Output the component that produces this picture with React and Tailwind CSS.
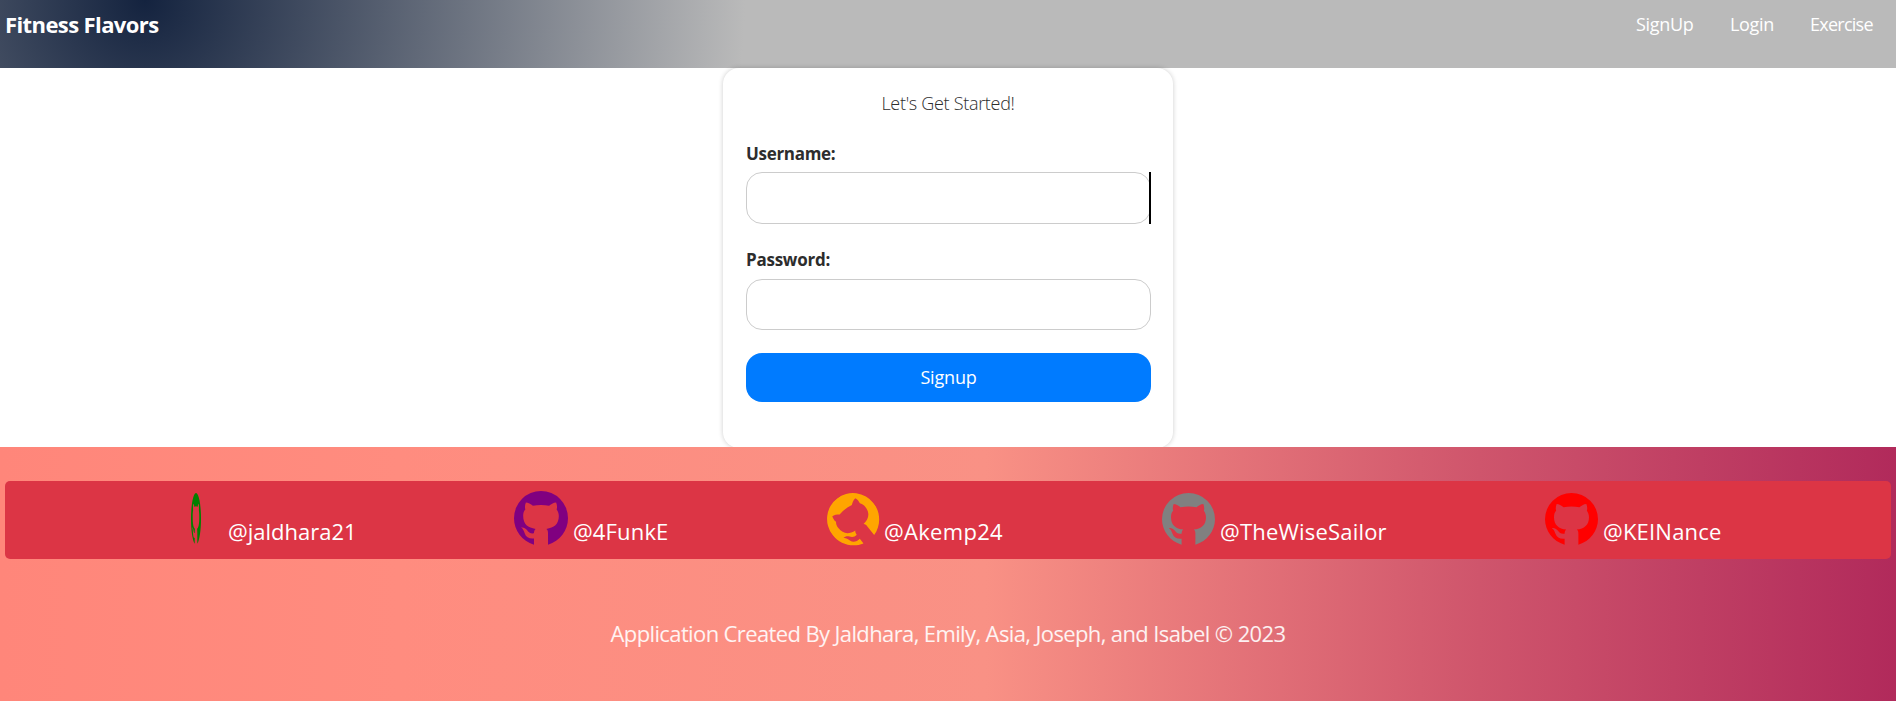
const FONT = "font-['Open_Sans','Noto_Sans',sans-serif]";

const links = [
  { label: "SignUp", cls: "w-[58px] tracking-[-0.3px]" },
  { label: "Login", cls: "w-[44px] tracking-[-0.3px]" },
  { label: "Exercise", cls: "w-[63px] tracking-[-0.75px]" },
];

function Mark({ className }) {
  return (
    <svg className={className} viewBox="0 0 100 99" preserveAspectRatio="none" fill="currentColor" aria-hidden="true">
      <path d="M37 98.5C15 92 0 72 0 50A50 50 0 1 1 100 50C100 72 85 92 63 98.5V78C63 74 62.5 71 60 69.5C74 68 83 61 83 46C83 41 81 37 79 34C80 30 80 26 78 21C73 21 68 25 65 27C55 25 45 25 35 27C31 24 26 21 22 21C20 26 20 30 21 34C18 37 17 41 17 46C17 61 26 68 40 69.5C38 71 37 74 37 77.5C31 78.5 27 76 24 71.5C21 68 17 66 13 67C17 69 18 73 20 78C22 85 29 88 37 87Z" />
    </svg>
  );
}

function Member({ name, className, icon }) {
  return (
    <a className={`flex h-full shrink-0 items-start whitespace-nowrap ${className}`}>
      {icon}
      <span className="mt-[33px] leading-[34px]">{name}</span>
    </a>
  );
}

export default function App() {
  return (
    <div className={`${FONT} flex h-[701px] w-full flex-col overflow-hidden bg-white text-[#2d2d2d]`}>
      <header className="flex h-[68px] shrink-0 items-start justify-between bg-[radial-gradient(600px_600px_at_145px_0px,#14233f_0%,#bababa_100%)] pr-[23px] pl-[5px] text-white">
        <h1 className="mt-[8px] text-[22px] leading-[32px] font-bold tracking-[-0.6px] whitespace-nowrap">Fitness Flavors</h1>
        <nav className="mt-[11px] flex gap-[36px] text-[18px] leading-[27px]">
          {links.map((l) => (
            <a key={l.label} className={`whitespace-nowrap ${l.cls}`}>{l.label}</a>
          ))}
        </nav>
      </header>

      <main className="flex h-[379px] shrink-0 justify-center">
        <form className="h-[380px] w-[450px] rounded-[16px] bg-white px-[23px] shadow-[0_0_5px_rgba(0,0,0,0.2)]">
          <p className="pt-[22px] text-center text-[18px] leading-[27px] font-[350] tracking-[-0.3px]">Let's Get Started!</p>
          <label className="mt-[23px] block text-[17px] leading-[27px] font-bold tracking-[-0.3px]">Username:</label>
          <div className="relative mt-[5px] h-[52px] w-[405px]">
            <input className="block h-full w-full rounded-[16px] border border-[#ccc] bg-white" />
            <span className="absolute top-0 right-0 h-full w-[2px] bg-black" />
          </div>
          <label className="mt-[22px] block text-[17px] leading-[27px] font-bold tracking-[-0.25px]">Password:</label>
          <input type="password" className="mt-[6px] block h-[51px] w-[405px] rounded-[16px] border border-[#ccc] bg-white" />
          <button type="button" className="mt-[23px] block h-[49px] w-[405px] rounded-[16px] bg-[#007bff] text-[18px] tracking-[-0.2px] text-white">Signup</button>
        </form>
      </main>

      <footer className="relative flex grow flex-col items-center bg-[linear-gradient(to_right,#ff867a_0%,#ff8c7f_21%,#f99185_52%,#cf556c_78%,#b12a5b_100%)] px-[5px] pt-[34px] text-[22px] text-white">
        <div className="flex h-[78px] w-full shrink-0 items-start rounded-[5px] bg-[#dc3545]">
          <Member name="@jaldhara21" className="ml-[186px] w-[323px]" icon={<Mark className="mt-[12px] mr-[27px] h-[51px] w-[10px] text-[green]" />} />
          <Member name="@4FunkE" className="w-[313px] tracking-[0.15px]" icon={<Mark className="mt-[10px] mr-[5px] h-[54px] w-[54px] text-[purple]" />} />
          <Member name="@Akemp24" className="w-[335px] tracking-[0.3px]" icon={<Mark className="mt-[12px] mr-[5px] h-[52px] w-[52px] rotate-[-38deg] text-[orange]" />} />
          <Member name="@TheWiseSailor" className="w-[383px] tracking-[0.2px]" icon={<Mark className="mt-[12px] mr-[5px] h-[52px] w-[53px] text-[gray]" />} />
          <Member name="@KEINance" className="tracking-[0.2px]" icon={<Mark className="mt-[12px] mr-[5px] h-[52px] w-[53px] text-[red]" />} />
        </div>
        <p className="mt-[56px] leading-[36px] tracking-[-0.62px] whitespace-nowrap text-white/90">
          Application Created By Jaldhara, Emily, Asia, Joseph, and Isabel © 2023
        </p>
      </footer>
    </div>
  );
}
